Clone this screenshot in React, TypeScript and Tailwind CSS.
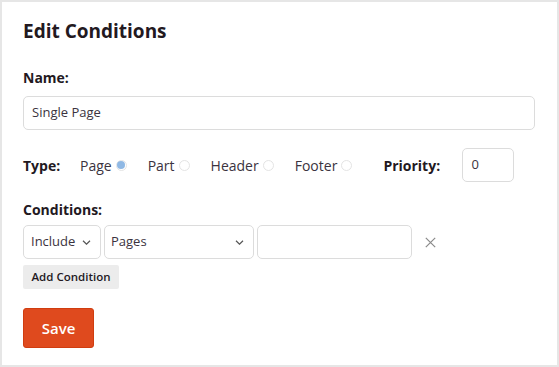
import React from 'react';

const font = { fontFamily: '"Open Sans", "Noto Sans", sans-serif' };

const Radio = ({ label, checked }: { label: string; checked?: boolean }) => (
  <label className="flex items-center gap-[4px] text-[14px] text-[#3b3340]">
    <span>{label}</span>
    <span className="flex h-[11px] w-[11px] items-center justify-center rounded-full border border-[#e4e4e4] bg-white">
      {checked && <span className="h-[8px] w-[8px] rounded-full bg-[#8fb8e4]" />}
    </span>
  </label>
);

const Chevron = () => (
  <svg width="9" height="5" viewBox="0 0 9 5" fill="none" stroke="#555" strokeWidth="1.2">
    <path d="M1 0.8l3.5 3.4 3.5-3.4" />
  </svg>
);

export default function App() {
  return (
    <div className="h-[367px] w-[559px] border-2 border-[#e6e6e6] bg-white" style={font}>
      <div className="pl-[21px] pr-[22px] pt-[16px]">
        <h1 className="text-[19px] font-bold leading-[26px] text-[#23191f]">Edit Conditions</h1>

        {/* Name */}
        <div className="mt-[24px] text-[14px] font-bold leading-[20px] text-[#23191f]">Name:</div>
        <div className="mt-[8px] flex h-[34px] w-[512px] items-center rounded-[5px] border border-[#dcdcdc] px-[8px] text-[13px] text-[#3b3340]">
          Single Page
        </div>

        {/* Type */}
        <div className="mt-[18px] flex h-[34px] items-center">
          <span className="w-[57px] text-[14px] font-bold text-[#23191f]">Type:</span>
          <div className="flex items-center gap-[21px]">
            <Radio label="Page" checked />
            <Radio label="Part" />
            <Radio label="Header" />
            <Radio label="Footer" />
          </div>
          <span className="ml-[31px] w-[79px] text-[14px] font-bold text-[#23191f]">Priority:</span>
          <div className="flex h-[34px] w-[52px] items-center rounded-[5px] border border-[#dcdcdc] px-[8px] text-[13px] text-[#3b3340]">
            0
          </div>
        </div>

        {/* Conditions */}
        <div className="mt-[18px] text-[14px] font-bold leading-[20px] text-[#23191f]">Conditions:</div>
        <div className="mt-[5px] flex items-center gap-[3px]">
          <div className="flex h-[34px] w-[78px] items-center justify-between rounded-[5px] border border-[#dcdcdc] pl-[7px] pr-[9px] text-[13px] text-[#3b3340]">
            <span>Include</span>
            <Chevron />
          </div>
          <div className="flex h-[34px] w-[150px] items-center justify-between rounded-[5px] border border-[#dcdcdc] pl-[6px] pr-[9px] text-[13px] text-[#3b3340]">
            <span>Pages</span>
            <Chevron />
          </div>
          <div className="h-[34px] w-[155px] rounded-[5px] border border-[#dcdcdc]" />
          <svg className="ml-[10px]" width="11" height="11" viewBox="0 0 11 11" stroke="#8a8a8a" strokeWidth="1.2">
            <path d="M0.8 0.8l9.4 9.4M10.2 0.8L0.8 10.2" />
          </svg>
        </div>

        <button className="mt-[6px] flex h-[24px] w-[96px] items-center justify-center rounded-[2px] bg-[#ececec] text-[11.5px] font-semibold text-[#23191f]">
          Add Condition
        </button>

        <button className="mt-[19px] flex h-[40px] w-[71px] items-center justify-center rounded-[3px] border border-[#d03d10] bg-[#df4a1e] text-[15px] font-semibold text-white">
          Save
        </button>
      </div>
    </div>
  );
}
